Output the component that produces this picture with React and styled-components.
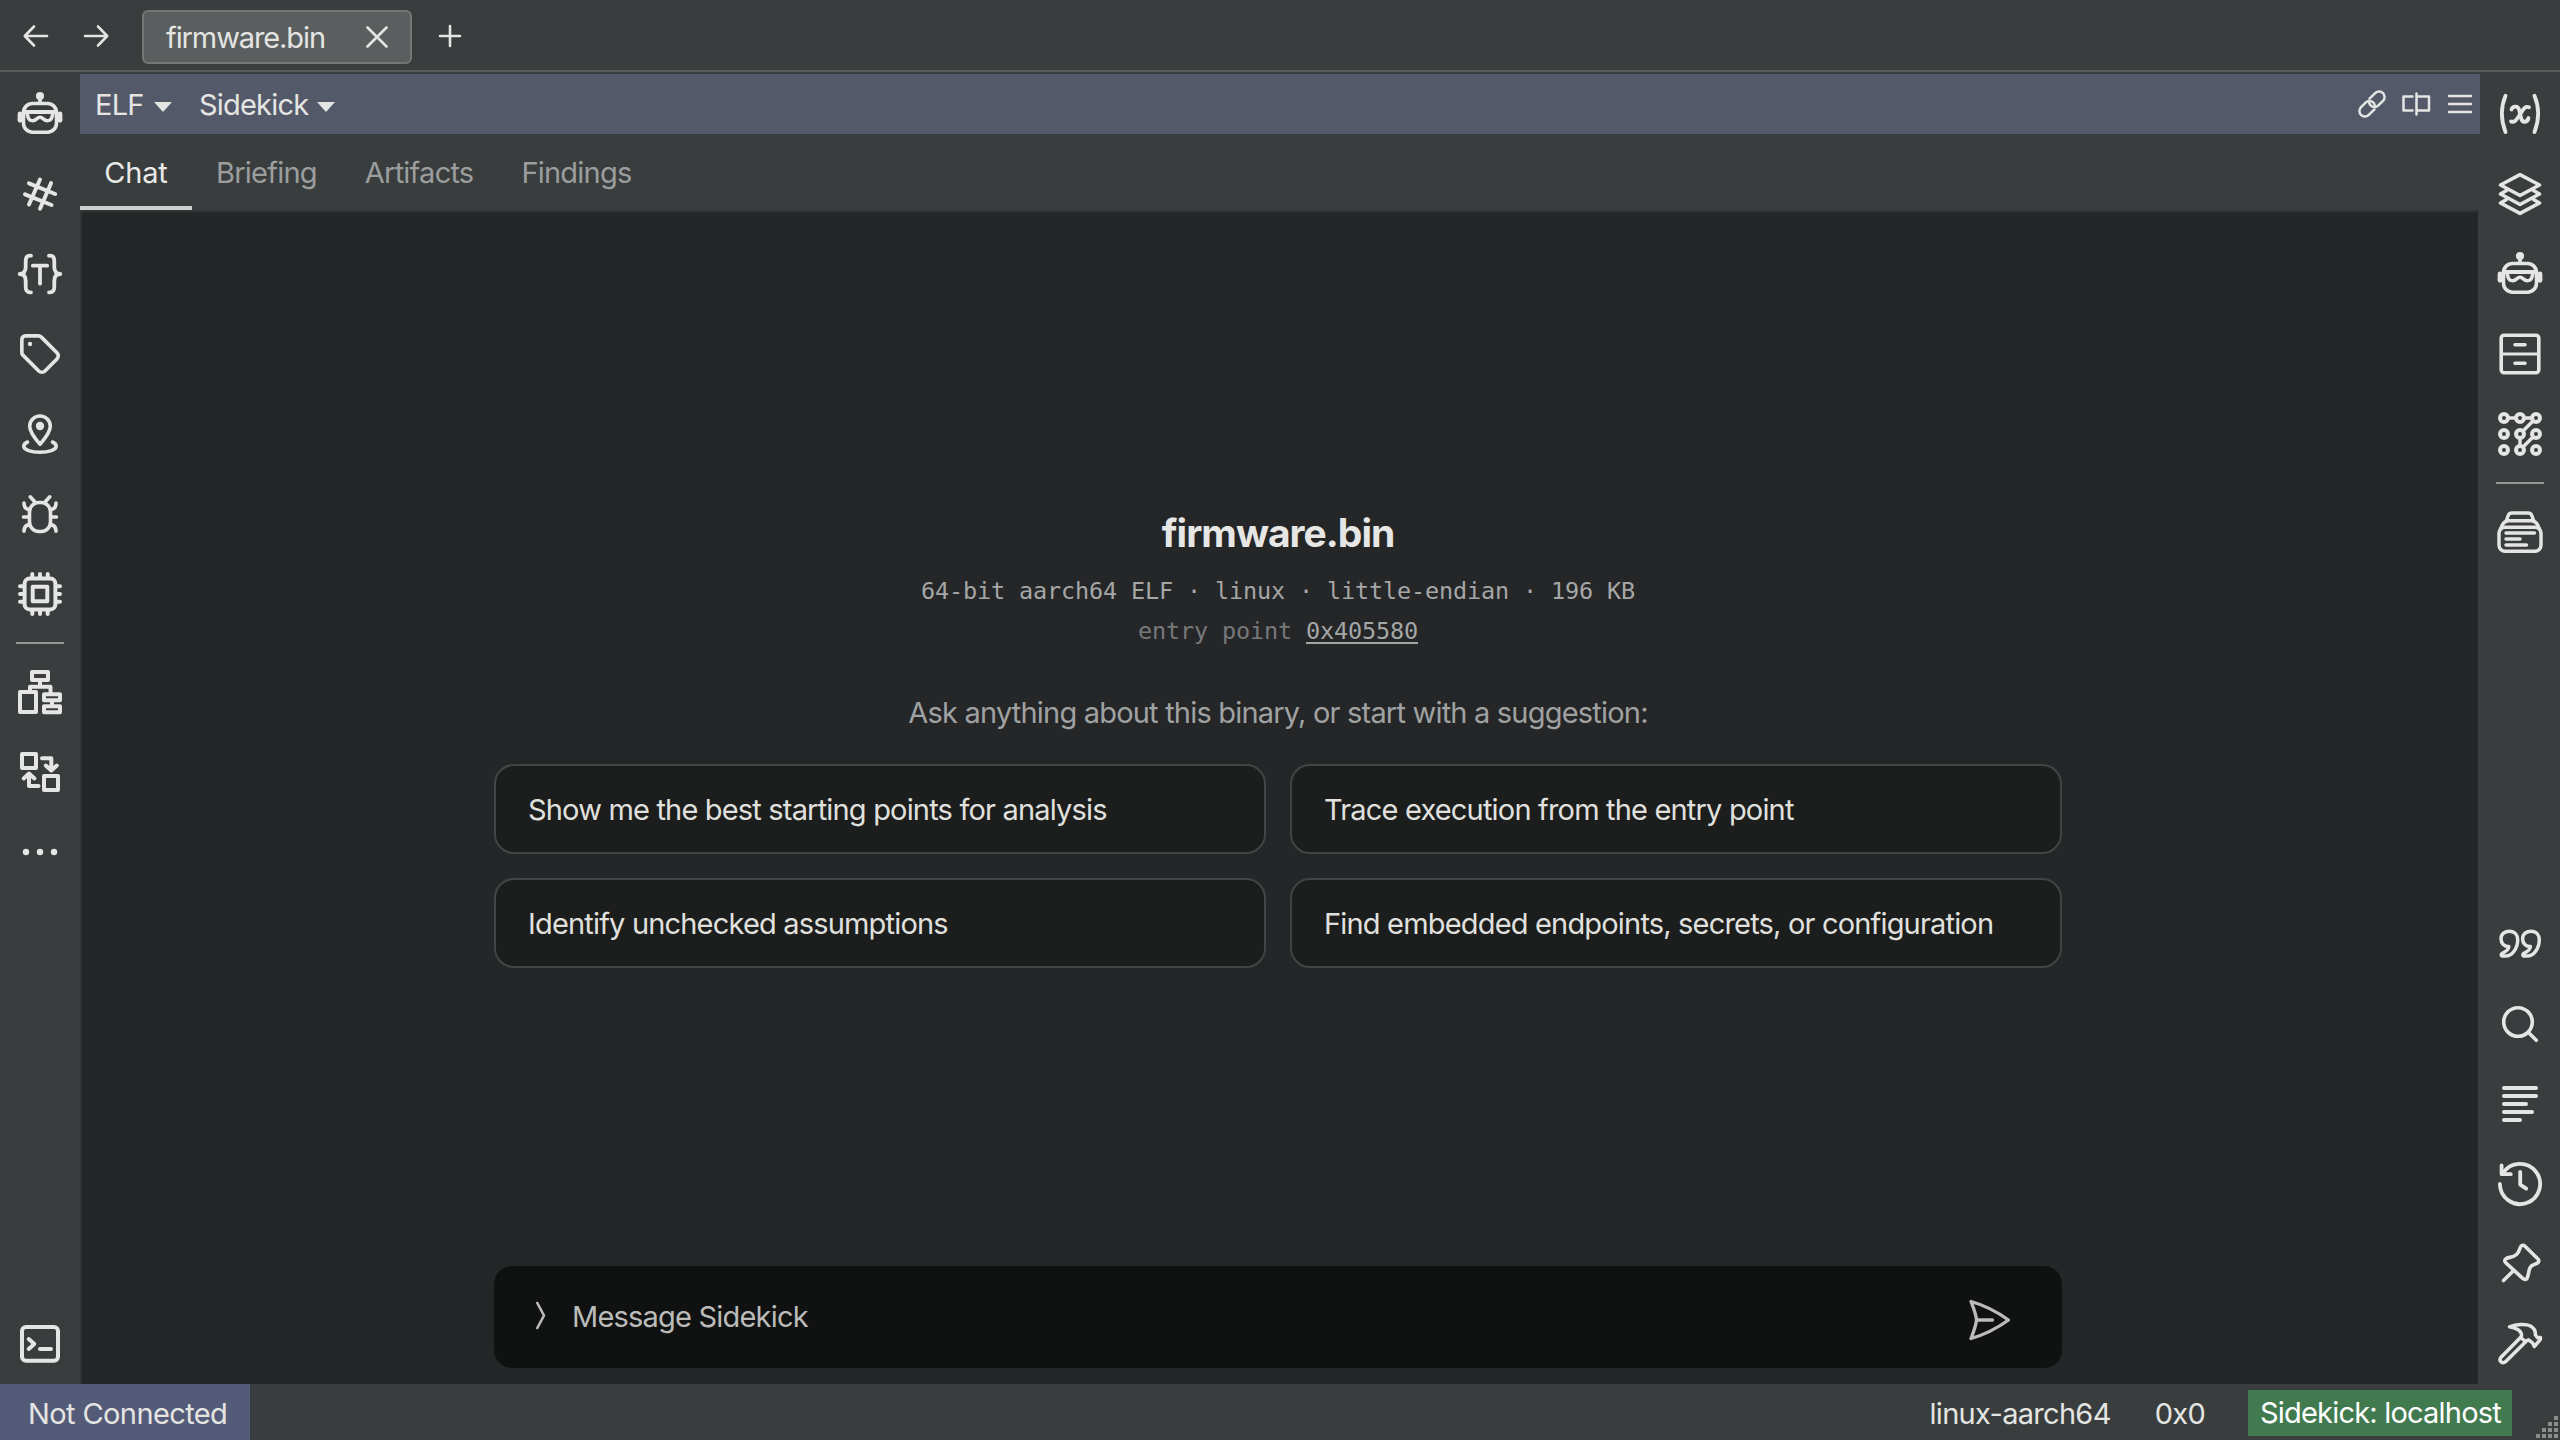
import React, { useState } from 'react';
import styled, { createGlobalStyle } from 'styled-components';

const GlobalStyle = createGlobalStyle`
  * {
    box-sizing: border-box;
  }

  body {
    margin: 0;
    background: #393d3d;
  }
`;

const Window = styled.div`
  display: flex;
  flex-direction: column;
  width: 2560px;
  height: 1440px;
  overflow: hidden;
  background: #393d3d;
  color: #e4e5e3;
  font-family: Inter, 'Liberation Sans', sans-serif;
  font-size: 29px;
  line-height: 40px;
  letter-spacing: -0.8px;
`;

const TitleBar = styled.header`
  display: flex;
  align-items: center;
  height: 72px;
  padding: 2px 0 0 16px;
  border-bottom: 2px solid #585c5b;
`;

const NavButton = styled.button`
  display: flex;
  align-items: center;
  justify-content: center;
  width: 40px;
  height: 40px;
  margin: 0 ${(props) => props.$gap || '0'} 0 0;
  padding: 0;
  border: 0;
  background: transparent;
  color: inherit;
`;

const FileTab = styled.div`
  display: flex;
  align-items: center;
  justify-content: space-between;
  width: 270px;
  height: 54px;
  margin: 2px 18px 0 0;
  padding: 0 11px 0 22px;
  border: 2px solid #737776;
  border-radius: 6px;
  background: #5a5e5e;
  letter-spacing: -1.1px;
`;

const FileTabLabel = styled.span`
  padding-top: 2px;
`;

const Workspace = styled.div`
  display: flex;
  flex: 1;
  min-height: 0;
  padding-top: 2px;
`;

const Sidebar = styled.nav`
  display: flex;
  flex-direction: column;
  width: 80px;
`;

const SidebarButton = styled.button`
  display: flex;
  align-items: center;
  justify-content: center;
  width: 80px;
  height: 80px;
  padding: 0;
  border: 0;
  background: transparent;
  color: #e4e5e4;
`;

const SidebarDivider = styled.hr`
  width: 48px;
  height: 2px;
  margin: 8px 16px;
  border: 0;
  background: #949796;
`;

const Spacer = styled.div`
  flex: 1;
`;

const Pane = styled.main`
  display: flex;
  flex-direction: column;
  width: 2400px;
`;

const PaneHeader = styled.div`
  display: flex;
  align-items: center;
  height: 60px;
  padding: 1px 0 0 15px;
  background: #545969;
`;

const Dropdown = styled.div`
  display: flex;
  align-items: center;
  gap: ${(props) => props.$gap};
  width: ${(props) => props.$width};
`;

const Caret = styled.span`
  margin-top: 4px;
  border: 9px solid transparent;
  border-top: 10px solid #e4e5e3;
  border-bottom: 0;
`;

const HeaderActions = styled.div`
  display: flex;
  margin: -1px -2px 0 auto;
`;

const HeaderIcon = styled.span`
  display: flex;
  align-items: center;
  justify-content: center;
  width: 44px;
  height: 44px;
`;

const TabList = styled.div`
  display: flex;
  height: 76px;
`;

const TabButton = styled.button`
  min-width: 112px;
  height: 76px;
  padding: 5px 24px 0;
  border: 0;
  border-bottom: 4px solid ${(props) => (props.$active ? '#cfd1d1' : 'transparent')};
  background: transparent;
  color: ${(props) => (props.$active ? '#e9eae8' : '#9b9e9d')};
  font: inherit;
  letter-spacing: ${(props) => (props.$active ? '-0.2px' : '-0.77px')};
`;

const ChatView = styled.section`
  display: flex;
  flex: 1;
  flex-direction: column;
  align-items: center;
  margin-right: 2px;
  padding: 297px 4px 16px 0;
  border-top: 2px solid #313434;
  border-left: 2px solid #313434;
  background: #252628;
`;

const FileName = styled.h1`
  margin: 0 0 14px;
  color: #e6e6e4;
  font-size: 39px;
  font-weight: 700;
  line-height: 48px;
  letter-spacing: -1px;
`;

const Meta = styled.div`
  color: ${(props) => (props.$dim ? '#77797a' : '#a5a7a7')};
  font-family: 'DejaVu Sans Mono', monospace;
  font-size: 23.5px;
  line-height: 40px;
  letter-spacing: -0.15px;
  white-space: pre;
`;

const Address = styled.a`
  color: #a5a7a7;
  text-decoration: underline;
  text-decoration-thickness: 1.5px;
  text-underline-offset: 3px;
`;

const Hint = styled.p`
  margin: 42px 0 31px;
  color: #a0a2a2;
`;

const Suggestions = styled.div`
  display: grid;
  grid-template-columns: 772px 772px;
  gap: 24px;
`;

const Suggestion = styled.button`
  height: 90px;
  padding: 1px 32px 0;
  border: 2px solid #424545;
  border-radius: 20px;
  background: #1c1d1d;
  color: #e0e1df;
  font: inherit;
  letter-spacing: -0.82px;
  text-align: left;
`;

const Composer = styled.div`
  display: flex;
  align-items: center;
  width: 1568px;
  height: 102px;
  margin-top: auto;
  padding: 0 48px 0 40px;
  border-radius: 18px;
  background: #101211;
  color: #bbbcba;
`;

const ComposerInput = styled.div`
  flex: 1;
  margin-left: 6px;
`;

const StatusBar = styled.footer`
  display: flex;
  align-items: center;
  height: 56px;
`;

const Connection = styled.div`
  width: 250px;
  height: 56px;
  padding: 10px 0 0 28px;
  background: #545b78;
  letter-spacing: -0.6px;
`;

const StatusText = styled.span`
  margin: 3px ${(props) => props.$gap} 0 0;
  letter-spacing: -0.7px;
`;

const ServerBadge = styled.div`
  width: 264px;
  height: 46px;
  margin: 2px 22px 0 0;
  padding: 3px 0 0 12px;
  background: #427a50;
  color: #fff;
`;

const Grip = styled.svg`
  align-self: flex-end;
  width: 26px;
  height: 26px;
  fill: #8b8e8d;
`;

const Svg = styled.svg`
  flex: none;
  fill: none;
  stroke: currentColor;
  stroke-linecap: round;
  stroke-linejoin: round;
`;

const Icon = ({ children, weight = 3.6, size = 48 }) => (
  <Svg width={size} height={size} viewBox={`0 0 ${size} ${size}`} strokeWidth={weight}>
    {children}
  </Svg>
);

const Dot = (props) => <circle {...props} fill="currentColor" stroke="none" />;

const RobotIcon = () => (
  <Icon weight={3.6}>
    <Dot cx="24" cy="6" r="4.1" />
    <path d="M24 7v6" />
    <rect x="7.5" y="13.5" width="33" height="28.7" rx="9" />
    <path d="M9 22h30" strokeWidth="4" />
    <path d="M11 22.5l.7 3.5c.7 3.500 2.300 4.800 5.100 4.800 3.500 0 4.200-3.600 7.200-3.600s3.700 3.600 7.200 3.600c2.800 0 4.400-1.300 5.100-4.800l.7-3.500" />
    <path d="M4 24v6.300M44 24v6.300" strokeWidth="4.800" />
  </Icon>
);

const HashIcon = () => (
  <Icon weight={4}>
    <path d="M24 9.500L13 34.500M35 13.200L24 38.700M13 13.300l26.200 10.700M9 24.300l26.500 10.700" />
  </Icon>
);

const TypesIcon = () => (
  <Icon weight={3.8}>
    <path d="M15 5.700h-1C10.500 5.700 9.700 8 9.700 11v6c0 4-1.700 7-6 7 4.300 0 6 3 6 7v5.500c0 3.500.8 5.800 4.300 5.800h1" />
    <path d="M33 5.700h1c3.500 0 4.300 2.300 4.300 5.300v6c0 4 1.700 7 6 7-4.300 0-6 3-6 7v5.500c0 3.500-.8 5.800-4.300 5.800h-1" />
    <path d="M16.800 15.700h14.400M24 15.700v18" />
  </Icon>
);

const TagIcon = () => (
  <Icon>
    <g transform="translate(2.200 2.200) scale(1.82)" strokeWidth="2">
      <path d="M12.586 2.586A2 2 0 0 0 11.172 2H4a2 2 0 0 0-2 2v7.172a2 2 0 0 0 .586 1.414l8.704 8.704a2.426 2.426 0 0 0 3.420 0l6.580-6.580a2.426 2.426 0 0 0 0-3.420z" />
    </g>
    <Dot cx="14" cy="14" r="2.200" />
  </Icon>
);

const LocationIcon = () => (
  <Icon>
    <path d="M24 34.200C18 27.500 13.700 22 13.700 16.300a10.300 10.300 0 0 1 20.600 0C34.300 22 30 27.500 24 34.200z" />
    <Dot cx="24" cy="16" r="4.200" />
    <path d="M11.500 32c-2.600 1.200-3.700 2.800-3.700 4.300 0 3.600 7.200 5.900 16.200 5.900s16.200-2.300 16.200-5.900c0-1.500-1.100-3.100-3.700-4.300" />
  </Icon>
);

const BugIcon = () => (
  <Icon>
    <rect x="13.500" y="12.500" width="21" height="29" rx="9.500" />
    <path d="M14.200 6.800l5 5.500M33.800 6.800l-5 5.500" />
    <path d="M8 13c0 4 2 6.300 5.500 6.700M40 13c0 4-2 6.300-5.500 6.700" />
    <path d="M7.500 27h5.500M40.500 27H35" />
    <path d="M8 41.300c0-4 2-6.300 5.500-6.700M40 41.300c0-4-2-6.300-5.500-6.700" />
  </Icon>
);

const ChipIcon = () => (
  <Icon weight={4}>
    <rect x="8.600" y="8.600" width="30.800" height="30.800" rx="5" />
    <rect x="16.700" y="16.700" width="14.600" height="14.600" />
    <path d="M16.300 4v4M24 4v4M31.700 4v4M16.300 40v4M24 40v4M31.700 40v4" />
    <path d="M4 16.300h4M4 24h4M4 31.700h4M40 16.300h4M40 24h4M40 31.700h4" />
  </Icon>
);

const HierarchyIcon = () => (
  <Icon weight={4}>
    <rect x="16" y="4" width="16" height="8" />
    <rect x="4" y="24" width="16" height="20" />
    <rect x="28" y="26.200" width="16" height="6" />
    <rect x="28" y="38.200" width="16" height="6" />
    <path d="M24 12v6.700M14 23v-4.300h20.500v6M36 33v4" />
  </Icon>
);

const SwapIcon = () => (
  <Icon weight={4}>
    <rect x="6" y="6" width="14" height="14" />
    <rect x="28" y="28" width="14" height="14" />
    <path d="M26 10.200h9.300v12M29.800 17.500l5.500 5 5.500-5" />
    <path d="M22.500 38H13V26M7.700 30.500l5.300-5 5.500 5" />
  </Icon>
);

const MoreIcon = () => (
  <Icon>
    <Dot cx="10" cy="24" r="3.200" />
    <Dot cx="24" cy="24" r="3.200" />
    <Dot cx="38" cy="24" r="3.200" />
  </Icon>
);

const TerminalIcon = () => (
  <Icon weight={4}>
    <rect x="6" y="7" width="36" height="33.700" rx="4" />
    <path d="M12.700 19l5.600 5-5.600 5M24 29h11" />
  </Icon>
);

const VariableIcon = () => (
  <Icon weight={3.8}>
    <path d="M9.500 5.700C4.800 17 4.800 30 9.500 42M38.500 5.700C43.200 17 43.200 30 38.500 42" />
    <path d="M15.500 19.500c1-3.500 6.500-4.500 7.700.5l2 8.500c1.200 4.800 6.300 4 7.300-.5" />
    <path d="M33 17.200c-3.800-1.600-5.500 1.800-8.800 6.800-3.200 4.800-5.200 9.200-9.200 7.400" />
  </Icon>
);

const LayersIcon = () => (
  <Icon weight={3.6}>
    <path d="M24 4.700L43.500 15 24 25.500 4.500 15z" />
    <path d="M10.500 20.500L4.500 24 24 34.500 43.500 24l-6-3.500" />
    <path d="M10.500 29.500L4.500 33 24 43.400 43.500 33l-6-3.500" />
  </Icon>
);

const DrawerIcon = () => (
  <Icon>
    <rect x="5.200" y="5.200" width="37.600" height="37.600" rx="3" />
    <path d="M5.500 24h37" strokeWidth="3" />
    <path d="M19 14.700h10M19 33.300h10" />
  </Icon>
);

const NodesIcon = () => (
  <Icon weight={4}>
    {[8, 24, 40].map((cy) =>
      [8, 24, 40].map((cx) => <circle key={`${cx}-${cy}`} cx={cx} cy={cy} r="4" />)
    )}
    <path d="M13 8h6M29 8h6M36.500 11.500l-9 9M24 29v6M27.500 36.500l9-9" strokeWidth="3.400" />
  </Icon>
);

const StackIcon = () => (
  <Icon weight={3.5}>
    <rect x="3" y="19.300" width="42" height="24" rx="6" />
    <path d="M4.500 21c1.500-4.500 4-8.300 8-8.300h23c4 0 6.500 3.800 8 8.300" />
    <path d="M10 13.500l2.200-6C12.800 5.800 14 5 16 5h16c2 0 3.200.8 3.800 2.500l2.200 6" />
    <path d="M10 25h28.500M10 31h14M10 37h20.500" />
  </Icon>
);

const QuoteMark =
  'M5 18.700C5 14 9 11.200 13.500 11.200c5 0 8.200 3.600 8.200 8.600 0 8.200-5.200 16.300-12.200 16.300H7c-2.300 0-2.300-2.300-.5-3 3.600-1.500 6-3.700 6.300-6.500C8.300 26.600 5 23.600 5 18.700z';

const QuoteIcon = () => (
  <Icon weight={3.5}>
    <path d={QuoteMark} />
    <path d={QuoteMark} transform="translate(21.600 0)" />
  </Icon>
);

const SearchIcon = () => (
  <Icon>
    <circle cx="22" cy="22" r="14.300" />
    <path d="M32.500 32.500l7.800 7.800" />
  </Icon>
);

const LogIcon = () => (
  <Icon weight={4}>
    <path d="M8 8h32M8 16h32M8 24h22M8 32h28M8 40h16" />
  </Icon>
);

const HistoryIcon = () => (
  <Icon weight={3.8}>
    <path d="M3.900 24A20.100 20.100 0 1 0 7 13.300" />
    <path d="M5.600 5.500v8.700h9.200" />
    <path d="M24.200 12v12.600l6 4" />
  </Icon>
);

const PinIcon = () => (
  <Icon>
    <path d="M24.500 7c.7-2 3-2.300 4.500-.8L42 19c1.500 1.600.8 3.500-1 4.300-4 1.500-6.500 2.200-7.500 5.700-1 3.500-1 6.500-2.500 9.300-.8 1.500-2.800 1.500-4 .3L9.500 22.500c-1.200-1.500-.9-3.200.7-4 3.300-1.500 6.800-1 10.300-4 2.300-2 3-4.500 4-7.500z" />
    <path d="M7.500 40.500l10.200-10" />
  </Icon>
);

const HammerIcon = () => (
  <Icon weight={3.5}>
    <path d="M13.500 6.800C20 4 30 3.500 34.500 6c3.700 2.300 5.300 5.300 4.800 8.800l2.200 3 3-.2-.2 2-6 6.900-1.800-3.700-4-3-3 1.700-4.700-3.800C27 13.500 24.500 9 13.500 6.800z" />
    <path d="M24.500 17.500L4.800 37.500c-2.500 3.700 1.700 6.700 4.700 4.200L29.500 22" />
  </Icon>
);

const SendIcon = () => (
  <Icon weight={3.3}>
    <path d="M5 8.500C17.500 12 30 18 42.500 27 30 36 17.500 42 5 45.500 7.500 39 10 33 10.500 27 10 21 7.500 15 5 8.500zM11 27h15.500" />
  </Icon>
);

const leftTools = [HashIcon, TypesIcon, TagIcon, LocationIcon, BugIcon, ChipIcon];
const rightTools = [VariableIcon, LayersIcon, RobotIcon, DrawerIcon, NodesIcon];
const rightBottomTools = [QuoteIcon, SearchIcon, LogIcon, HistoryIcon, PinIcon, HammerIcon];

const tabs = ['Chat', 'Briefing', 'Artifacts', 'Findings'];

const suggestions = [
  'Show me the best starting points for analysis',
  'Trace execution from the entry point',
  'Identify unchecked assumptions',
  'Find embedded endpoints, secrets, or configuration',
];

const renderTools = (tools) =>
  tools.map((Tool, idx) => (
    <SidebarButton key={idx}>
      <Tool />
    </SidebarButton>
  ));

const App = () => {
  const [activeTab, setActiveTab] = useState('Chat');

  return (
    <>
      <GlobalStyle />
      <Window>
        <TitleBar>
          <NavButton $gap="20px">
            <Icon size={40} weight={2.6}>
              <path d="M31 20H9M18 10.500L8.800 20l9.200 9.500" />
            </Icon>
          </NavButton>
          <NavButton $gap="26px">
            <Icon size={40} weight={2.6}>
              <path d="M9 20h22M22 10.500l9.200 9.500-9.200 9.500" />
            </Icon>
          </NavButton>
          <FileTab>
            <FileTabLabel>firmware.bin</FileTabLabel>
            <Icon size={44} weight={2.6}>
              <path d="M12.500 12.500l19 19M31.500 12.500l-19 19" />
            </Icon>
          </FileTab>
          <NavButton>
            <Icon size={40} weight={2.6}>
              <path d="M20 10v20M10 20h20" />
            </Icon>
          </NavButton>
        </TitleBar>

        <Workspace>
          <Sidebar>
            {renderTools([RobotIcon, ...leftTools])}
            <SidebarDivider />
            {renderTools([HierarchyIcon, SwapIcon, MoreIcon])}
            <Spacer />
            {renderTools([TerminalIcon])}
          </Sidebar>

          <Pane>
            <PaneHeader>
              <Dropdown $width="104px" $gap="10px">
                ELF <Caret />
              </Dropdown>
              <Dropdown $width="160px" $gap="9px">
                Sidekick <Caret />
              </Dropdown>
              <HeaderActions>
                <HeaderIcon>
                  <Icon size={32} weight={2.5}>
                    <g transform="translate(16 16) rotate(-45)">
                      <path d="M-2 5.500h-8a5.500 5.500 0 0 1-5.500-5.500 5.500 5.500 0 0 1 5.500-5.500h6.500A5.500 5.500 0 0 1 2 0a5.500 5.500 0 0 1-2 4.200" />
                      <path d="M2-5.500h8A5.500 5.500 0 0 1 15.500 0 5.500 5.500 0 0 1 10 5.500H3.500A5.500 5.500 0 0 1-2 0a5.500 5.500 0 0 1 2-4.200" />
                    </g>
                  </Icon>
                </HeaderIcon>
                <HeaderIcon>
                  <Icon size={32} weight={2.5}>
                    <path d="M12.500 8.500H3.500v14h9M16.500 5.500v21M17 8.500h12v14H17" />
                  </Icon>
                </HeaderIcon>
                <HeaderIcon>
                  <Icon size={32} weight={2.4}>
                    <path d="M5 8h22M5 16h22M5 24h22" />
                  </Icon>
                </HeaderIcon>
              </HeaderActions>
            </PaneHeader>

            <TabList>
              {tabs.map((tab) => (
                <TabButton
                  key={tab}
                  $active={tab === activeTab}
                  onClick={() => setActiveTab(tab)}
                >
                  {tab}
                </TabButton>
              ))}
            </TabList>

            <ChatView>
              <FileName>firmware.bin</FileName>
              <Meta>64-bit aarch64 ELF · linux · little-endian · 196 KB</Meta>
              <Meta $dim>
                entry point <Address>0x405580</Address>
              </Meta>
              <Hint>Ask anything about this binary, or start with a suggestion:</Hint>
              <Suggestions>
                {suggestions.map((text) => (
                  <Suggestion key={text}>{text}</Suggestion>
                ))}
              </Suggestions>
              <Composer>
                <Icon size={32} weight={2.6}>
                  <path d="M3.300 2L10 14.500 3.300 27" />
                </Icon>
                <ComposerInput>Message Sidekick</ComposerInput>
                <SendIcon />
              </Composer>
            </ChatView>
          </Pane>

          <Sidebar>
            {renderTools(rightTools)}
            <SidebarDivider />
            {renderTools([StackIcon])}
            <Spacer />
            {renderTools(rightBottomTools)}
          </Sidebar>
        </Workspace>

        <StatusBar>
          <Connection>Not Connected</Connection>
          <Spacer />
          <StatusText $gap="44px">linux-aarch64</StatusText>
          <StatusText $gap="43px">0x0</StatusText>
          <ServerBadge>Sidekick: localhost</ServerBadge>
          <Grip viewBox="0 0 26 26">
            {[0, 1, 2, 3].map((row) =>
              [0, 1, 2, 3]
                .filter((col) => col + row >= 3)
                .map((col) => (
                  <rect key={`${row}-${col}`} x={2 + col * 6} y={2 + row * 6} width="4" height="4" />
                ))
            )}
          </Grip>
        </StatusBar>
      </Window>
    </>
  );
};

export default App;
